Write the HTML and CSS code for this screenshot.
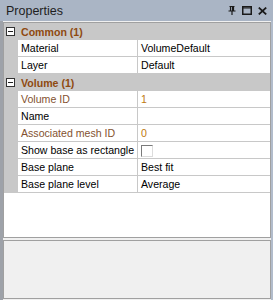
FILE: index.html
```html
<!DOCTYPE html>
<html lang="en">
<head>
    <meta charset="UTF-8">
    <title>Properties</title>
    <link rel="stylesheet" href="styles.css">
</head>
<body>
    <div class="panel">
        <div class="titlebar">
            <span class="title">Properties</span>
            <div class="buttons">
                <svg width="8" height="9" viewBox="0 0 8 9"><path d="M1.5 0.5h5M2.5 0.5v4M5.5 0.5v4M4.5 0.5v4M0.5 5h7M4 5v4" stroke="#1a1a1a" stroke-width="1.2" fill="none"/></svg>
                <svg width="10" height="9" viewBox="0 0 10 9"><rect x="0.75" y="0.75" width="8.5" height="7.5" stroke="#1a1a1a" stroke-width="1.5" fill="none"/><path d="M0 2h10" stroke="#1a1a1a" stroke-width="1"/></svg>
                <svg width="9" height="8" viewBox="0 0 9 8"><path d="M0.8 0.6l7.4 6.8M8.2 0.6l-7.4 6.8" stroke="#1a1a1a" stroke-width="1.8" fill="none"/></svg>
            </div>
        </div>
        <div class="body">
            <div class="grid">
                <div class="category">
                    <span class="toggle"></span>
                    <span class="cat-name">Common (1)</span>
                </div>
                <div class="row">
                    <div class="gutter"></div>
                    <div class="label">Material</div>
                    <div class="value">VolumeDefault</div>
                </div>
                <div class="row">
                    <div class="gutter"></div>
                    <div class="label">Layer</div>
                    <div class="value">Default</div>
                </div>
                <div class="category">
                    <span class="toggle"></span>
                    <span class="cat-name">Volume (1)</span>
                </div>
                <div class="row">
                    <div class="gutter"></div>
                    <div class="label readonly">Volume ID</div>
                    <div class="value number">1</div>
                </div>
                <div class="row">
                    <div class="gutter"></div>
                    <div class="label">Name</div>
                    <div class="value"></div>
                </div>
                <div class="row">
                    <div class="gutter"></div>
                    <div class="label readonly">Associated mesh ID</div>
                    <div class="value number">0</div>
                </div>
                <div class="row">
                    <div class="gutter"></div>
                    <div class="label">Show base as rectangle</div>
                    <div class="value"><span class="checkbox"></span></div>
                </div>
                <div class="row">
                    <div class="gutter"></div>
                    <div class="label">Base plane</div>
                    <div class="value">Best fit</div>
                </div>
                <div class="row">
                    <div class="gutter"></div>
                    <div class="label">Base plane level</div>
                    <div class="value">Average</div>
                </div>
            </div>
            <div class="description"></div>
        </div>
    </div>
</body>
</html>
```

FILE: styles.css
```css
* {
    margin: 0;
    padding: 0;
    box-sizing: border-box;
}

body {
    font-family: 'Liberation Sans', Arial, sans-serif;
    background: #f0f0f0;
}

.panel {
    width: 273px;
    height: 300px;
    display: flex;
    flex-direction: column;
}

.titlebar {
    height: 21px;
    background: #aab5c5;
    display: flex;
    align-items: center;
    justify-content: space-between;
    padding: 0 6px 0 6px;
}

.title {
    font-size: 12.5px;
    color: #1e1e1e;
}

.buttons {
    display: flex;
    align-items: center;
    gap: 6px;
}

.body {
    flex: 1;
    display: flex;
    flex-direction: column;
    background: #f0f0f0;
    border-left: 3px solid #9ea2a9;
    border-right: 2px solid #b2bccb;
    padding: 1px 0 1px 0;
}

.grid {
    height: 216px;
    background: white;
    border: 1px solid #a0a0a0;
}

.category {
    height: 17px;
    background: #c8c8c8;
    display: flex;
    align-items: center;
    padding-left: 2px;
}

.toggle {
    width: 9px;
    height: 9px;
    border: 1px solid #333;
    background: #fff;
    position: relative;
    margin-right: 6px;
}

.toggle::after {
    content: '';
    position: absolute;
    left: 1px;
    top: 3px;
    width: 5px;
    height: 1px;
    background: #222;
}

.cat-name {
    font-size: 10.6px;
    font-weight: bold;
    color: #8f4a10;
}

.row {
    height: 17px;
    display: flex;
    font-size: 10.6px;
    color: #000;
}

.gutter {
    width: 14px;
    background: #c8c8c8;
}

.label {
    width: 120px;
    border-right: 1px solid #c8c8c8;
    border-bottom: 1px solid #c8c8c8;
    padding: 2px 0 0 3px;
    white-space: nowrap;
    overflow: hidden;
}

.label.readonly {
    color: #84522f;
}

.value {
    flex: 1;
    border-bottom: 1px solid #c8c8c8;
    padding: 2px 0 0 3px;
    white-space: nowrap;
}

.value.number {
    color: #c07a10;
}

.checkbox {
    display: block;
    width: 12px;
    height: 12px;
    margin-top: 1px;
    border-top: 1px solid #7a7a7a;
    border-left: 1px solid #7a7a7a;
    border-right: 1px solid #dcdcdc;
    border-bottom: 1px solid #dcdcdc;
    background: #fff;
}

.description {
    margin-top: 2px;
    flex: 1;
    background: #f0f0f0;
    border: 1px solid #a0a0a0;
}
```
